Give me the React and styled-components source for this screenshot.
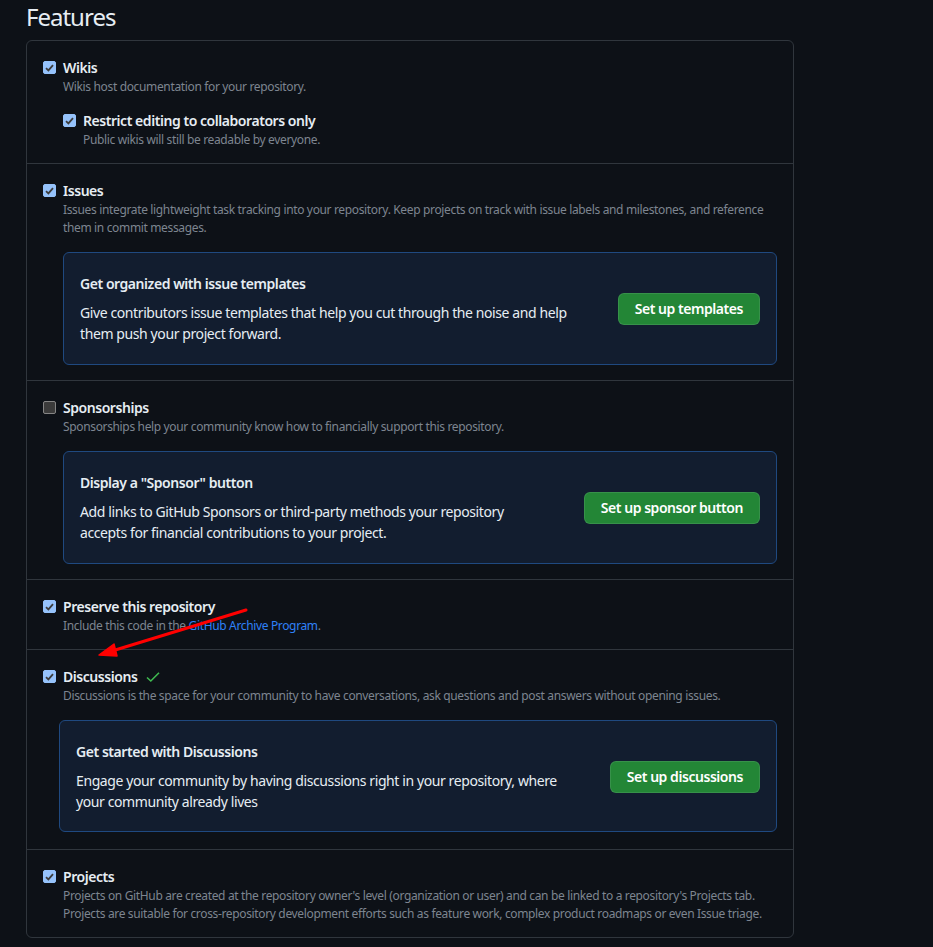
import React from 'react';
import styled, { createGlobalStyle } from 'styled-components';

const GlobalStyle = createGlobalStyle`
  html, body {
    margin: 0;
    padding: 0;
    background: #0d1117;
  }
  body {
    font-family: "Noto Sans", "Liberation Sans", sans-serif;
    color: #e6edf3;
  }
`;

const Page = styled.div`
  position: relative;
  width: 933px;
  height: 947px;
  overflow: hidden;
  padding: 0 0 0 26px;
  box-sizing: border-box;
`;

const Heading = styled.h2`
  margin: 0;
  padding-top: 3px;
  height: 37px;
  font-size: 24px;
  font-weight: 400;
  line-height: 28px;
  letter-spacing: -1px;
  color: #e6edf3;
`;

const Box = styled.div`
  width: 768px;
  box-sizing: border-box;
  border: 1px solid #30363d;
  border-radius: 6px;
`;

const Row = styled.div`
  padding: 16px 16px ${p => p.$pb || 15}px 16px;
  & + & {
    border-top: 1px solid #30363d;
  }
`;

const Option = styled.div`
  display: flex;
  align-items: flex-start;
  gap: 7px;
  margin-top: ${p => p.$mt || 0}px;
  margin-left: ${p => p.$ml || 0}px;
`;

const Check = styled.span`
  flex: none;
  width: 13px;
  height: 13px;
  margin-top: 4px;
  box-sizing: border-box;
  border-radius: 2px;
  display: flex;
  align-items: center;
  justify-content: center;
  background: ${p => (p.$on ? '#95c2fb' : '#3b3b3b')};
  border: 1px solid ${p => (p.$on ? '#95c2fb' : '#858585')};
`;

const Body = styled.div`
  flex: 1;
  min-width: 0;
`;

const Title = styled.div`
  display: flex;
  align-items: center;
  gap: 9px;
  font-size: 14px;
  font-weight: 600;
  line-height: 21px;
  letter-spacing: -0.45px;
  color: #e6edf3;
`;

const Note = styled.div`
  font-size: 12px;
  line-height: 18px;
  letter-spacing: -0.35px;
  color: #7d8590;
`;

const Link = styled.a`
  color: #2f81f7;
  text-decoration: none;
`;

const Callout = styled.div`
  display: flex;
  align-items: center;
  justify-content: space-between;
  gap: 24px;
  margin: 15px 0 0 ${p => p.$ml || 0}px;
  padding: 20px 16px ${p => p.$pb || 20}px 16px;
  background: #121d2f;
  border: 1px solid #1f4980;
  border-radius: 6px;
`;

const CalloutTitle = styled.div`
  font-size: 14px;
  font-weight: 600;
  line-height: 21px;
  letter-spacing: -0.45px;
  color: #e6edf3;
`;

const CalloutText = styled.div`
  margin-top: 8px;
  font-size: 14px;
  line-height: 21px;
  letter-spacing: -0.4px;
  color: #e6edf3;
  white-space: nowrap;
`;

const Button = styled.button`
  flex: none;
  height: 32px;
  padding: 0 16px;
  border: 1px solid rgba(240, 246, 252, 0.1);
  border-radius: 6px;
  background: #238636;
  color: #ffffff;
  font-family: inherit;
  font-size: 14px;
  font-weight: 600;
  line-height: 20px;
  letter-spacing: -0.45px;
`;

const Arrow = styled.svg`
  position: absolute;
  left: 0;
  top: 0;
  pointer-events: none;
`;

function Tick() {
  return (
    <svg width="9" height="8" viewBox="0 0 9 8">
      <path d="M1 4.2 L3.4 6.4 L8 1.2" fill="none" stroke="#3b3b3b" strokeWidth="1.8" />
    </svg>
  );
}

function Setting({ on = true, title, extra, children, ml, mt }) {
  return (
    <Option $ml={ml} $mt={mt}>
      <Check $on={on}>{on && <Tick />}</Check>
      <Body>
        <Title>
          {title}
          {extra}
        </Title>
        {children}
      </Body>
    </Option>
  );
}

export default function App() {
  return (
    <Page>
      <GlobalStyle />
      <Heading>Features</Heading>
      <Box>
        <Row $pb={14}>
          <Setting title="Wikis">
            <Note>Wikis host documentation for your repository.</Note>
            <Setting title="Restrict editing to collaborators only" mt={14}>
              <Note>Public wikis will still be readable by everyone.</Note>
            </Setting>
          </Setting>
        </Row>
        <Row>
          <Setting title="Issues">
            <Note>
              Issues integrate lightweight task tracking into your repository. Keep projects on track with issue labels and milestones, and reference
              <br />
              them in commit messages.
            </Note>
            <Callout>
              <div>
                <CalloutTitle>Get organized with issue templates</CalloutTitle>
                <CalloutText>
                  Give contributors issue templates that help you cut through the noise and help
                  <br />
                  them push your project forward.
                </CalloutText>
              </div>
              <Button>Set up templates</Button>
            </Callout>
          </Setting>
        </Row>
        <Row>
          <Setting on={false} title="Sponsorships">
            <Note>Sponsorships help your community know how to financially support this repository.</Note>
            <Callout>
              <div>
                <CalloutTitle>Display a "Sponsor" button</CalloutTitle>
                <CalloutText>
                  Add links to GitHub Sponsors or third-party methods your repository
                  <br />
                  accepts for financial contributions to your project.
                </CalloutText>
              </div>
              <Button>Set up sponsor button</Button>
            </Callout>
          </Setting>
        </Row>
        <Row $pb={14}>
          <Setting title="Preserve this repository">
            <Note>
              Include this code in the <Link href="#">GitHub Archive Program</Link>.
            </Note>
          </Setting>
        </Row>
        <Row $pb={17}>
          <Setting
            title="Discussions"
            extra={
              <svg width="14" height="12" viewBox="0 0 14 12">
                <path d="M1 6.5 L4.8 10 L13 1.8" fill="none" stroke="#3fb950" strokeWidth="1.6" />
              </svg>
            }
          >
            <Note>
              Discussions is the space for your community to have conversations, ask questions and post answers without opening issues.
            </Note>
            <Callout $ml={-4} $pb={19}>
              <div>
                <CalloutTitle>Get started with Discussions</CalloutTitle>
                <CalloutText>
                  Engage your community by having discussions right in your repository, where
                  <br />
                  your community already lives
                </CalloutText>
              </div>
              <Button>Set up discussions</Button>
            </Callout>
          </Setting>
        </Row>
        <Row $pb={14}>
          <Setting title="Projects">
            <Note>
              Projects on GitHub are created at the repository owner's level (organization or user) and can be linked to a repository's Projects tab.
              <br />
              Projects are suitable for cross-repository development efforts such as feature work, complex product roadmaps or even Issue triage.
            </Note>
          </Setting>
        </Row>
      </Box>
      <Arrow width="933" height="947" viewBox="0 0 933 947">
        <line x1="246" y1="610" x2="112" y2="651" stroke="#ff0000" strokeWidth="3" strokeLinecap="round" />
        <path d="M99 655 L114 644 L117 656 Z" fill="#ff0000" stroke="#ff0000" strokeWidth="1.5" strokeLinejoin="round" />
      </Arrow>
    </Page>
  );
}
